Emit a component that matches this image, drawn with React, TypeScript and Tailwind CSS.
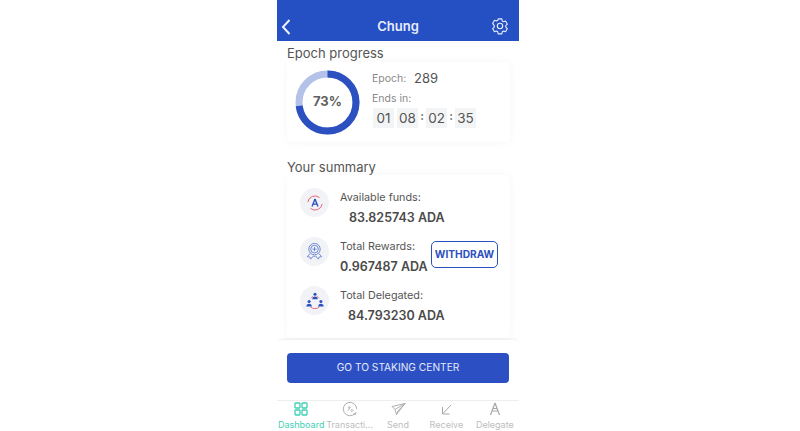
import React from "react";

const font = { fontFamily: '"Inter", "Liberation Sans", sans-serif' };

function Ring() {
  const r = 28.5;
  const c = 2 * Math.PI * r;
  return (
    <div className="relative w-[65px] h-[65px] shrink-0">
      <svg width="65" height="65" viewBox="0 0 65 65">
        <circle cx="32.5" cy="32.5" r={r} fill="none" stroke="#b4c1e8" strokeWidth="7" />
        <circle cx="32.5" cy="32.5" r={r} fill="none" stroke="#2c50c0" strokeWidth="7" strokeDasharray={`${c * 0.73} ${c}`} transform="rotate(-90 32.5 32.5)" />
      </svg>
      <div className="absolute inset-0 flex items-center justify-center text-[13px] font-bold text-[#606060]">73%</div>
    </div>
  );
}

function TimeBox({ v }: { v: string }) {
  return <div className="w-[21px] h-[20px] bg-[#f3f4f6] flex items-center justify-center text-[13.5px] text-[#555]">{v}</div>;
}

function Colon() {
  return <div className="w-[8px] text-center text-[11px] font-bold leading-[14px] text-[#555] mb-[5px]">:</div>;
}

function AdaIcon() {
  return (
    <svg width="18" height="18" viewBox="0 0 20 20" fill="none">
      <path d="M2 9a8 8 0 0 1 13-5" stroke="#e0556f" strokeWidth="1" />
      <path d="M18 11a8 8 0 0 1-13 5" stroke="#e0556f" strokeWidth="1" />
      <path d="M10 5.500l-3.300 8.500M10 5.500l3.300 8.500M7.800 11.200h4.400" stroke="#2c50c0" strokeWidth="1.500" />
    </svg>
  );
}

function RewardIcon() {
  return (
    <svg width="19" height="19" viewBox="0 0 20 20" fill="none" stroke="#5b78cf" strokeWidth="0.9">
      <circle cx="10" cy="7.500" r="6" />
      <circle cx="10" cy="7.500" r="4" />
      <path d="M10 5.300v4.400M7.800 7.500h4.400" />
      <path d="M5.500 12l-3 3.500 2.500.3 1 2.200 3-3.500 1 1 1-1 3 3.500 1-2.200 2.500-.3-3-3.500" />
    </svg>
  );
}

function DelegatedIcon() {
  return (
    <svg width="20" height="20" viewBox="0 0 22 22" fill="none">
      <path d="M6 17.500a7.500 7.500 0 0 0 10 0" stroke="#e0556f" strokeWidth="0.9" />
      <path d="M6.500 8a6 6 0 0 1 2.500-2M15.500 8a6 6 0 0 0-2.500-2" stroke="#e0556f" strokeWidth="0.9" />
      <g fill="#2c50c0">
        <circle cx="11" cy="3.500" r="1.700" />
        <path d="M8 9c0-2 1.300-3 3-3s3 1 3 3z" />
        <circle cx="4.500" cy="11.500" r="1.700" />
        <path d="M1.500 17c0-2 1.300-3 3-3s3 1 3 3z" />
        <circle cx="17.500" cy="11.500" r="1.700" />
        <path d="M14.500 17c0-2 1.300-3 3-3s3 1 3 3z" />
      </g>
    </svg>
  );
}

function Row({ icon, label, value, valueClass, action }: { icon: React.ReactNode; label: string; value: string; valueClass: string; action?: React.ReactNode }) {
  return (
    <div className="flex items-start h-[49px]">
      <div className="w-[29px] h-[29px] rounded-full bg-[#f1f3f6] flex items-center justify-center shrink-0 mt-[1px]">{icon}</div>
      <div className="ml-[11px] flex-1 min-w-0">
        <div className="text-[10.8px] leading-[16px] text-[#555] mt-[3px]">{label}</div>
        <div className={`text-[12.500px] leading-[16px] font-semibold text-[#4a4a4a] mt-[4px] whitespace-nowrap ${valueClass}`}>{value}</div>
      </div>
      {action}
    </div>
  );
}

function Tab({ label, active, children }: { label: string; active?: boolean; children: React.ReactNode }) {
  return (
    <div className="flex-1 flex flex-col items-center min-w-0">
      <div className="h-[19px] flex items-center justify-center">{children}</div>
      <div className={`text-[9px] leading-[12px] mt-[2px] whitespace-nowrap ${active ? "text-[#3fd0b4]" : "text-[#bdbdbd]"}`}>{label}</div>
    </div>
  );
}

export default function App() {
  return (
    <div className="w-[800px] h-[431px] bg-white overflow-hidden pl-[277px]" style={font}>
      <div className="w-[242px] h-[431px] flex flex-col bg-white">
        <header className="h-[41px] shrink-0 bg-[#2450c4] flex items-center justify-between pl-[3px] pr-[10px] pt-[12px] text-white">
          <div className="w-[30px]">
            <svg width="12" height="18" viewBox="0 0 12 18" fill="none" stroke="#eef2fb" strokeWidth="2"><path d="M9.500 2L3 9l6.500 7" /></svg>
          </div>
          <div className="text-[13px] font-semibold text-[#e8edfa]">Chung</div>
          <div className="w-[23px] flex justify-end mt-[-1px]">
            <svg width="18" height="18" viewBox="0 0 24 24" fill="none" stroke="#e8edfa" strokeWidth="1.500" strokeLinejoin="round">
              <path d="M9.600 2.500h4.800l.6 2.800 1.700 1 2.700-.9 2.400 4.200-2.100 1.900v2l2.100 1.900-2.400 4.200-2.700-.9-1.700 1-.6 2.800H9.600L9 19.700l-1.700-1-2.700.9-2.400-4.200 2.100-1.900v-2L2.200 8.600l2.400-4.200 2.700.9 1.700-1z" />
              <circle cx="12" cy="12" r="3.600" />
            </svg>
          </div>
        </header>

        <div className="px-[10px] flex-1 min-h-0 flex flex-col">
          <div className="text-[13px] leading-[18px] text-[#555] mt-[3px]">Epoch progress</div>
          <section className="h-[80px] w-[223px] bg-white rounded-[4px] shadow-[0_0_10px_rgba(0,0,0,0.04)] flex items-center pl-[8px]">
            <Ring />
            <div className="ml-[12px] mt-[-6px]">
              <div className="flex items-center h-[18px]">
                <span className="text-[10.500px] text-[#8a8a8a] w-[42px]">Epoch:</span>
                <span className="text-[13px] text-[#555]">289</span>
              </div>
              <div className="text-[10.500px] leading-[14px] text-[#8a8a8a] mt-[4px]">Ends in:</div>
              <div className="flex items-center mt-[2px] ml-[1px]">
                <TimeBox v="01" />
                <div className="w-[3px]" />
                <TimeBox v="08" />
                <Colon />
                <TimeBox v="02" />
                <Colon />
                <TimeBox v="35" />
              </div>
            </div>
          </section>
          <div className="text-[13px] leading-[18px] text-[#555] mt-[16px]">Your summary</div>
          <section className="mt-[-1px] h-[163px] w-[223px] bg-white rounded-[4px] shadow-[0_0_10px_rgba(0,0,0,0.04)] pl-[13px] pt-[12px]">
            <Row icon={<AdaIcon />} label="Available funds:" value="83.825743 ADA" valueClass="pl-[9px]" />
            <Row
              icon={<RewardIcon />}
              label="Total Rewards:"
              value="0.967487 ADA"
              valueClass=""
              action={
                <div className="w-[67px] h-[27px] mr-[12px] mt-[5px] border-[1.500px] border-[#2c50c0] rounded-[5px] flex items-center justify-center text-[10.200px] font-bold text-[#2c50c0] shrink-0">WITHDRAW</div>
              }
            />
            <Row icon={<DelegatedIcon />} label="Total Delegated:" value="84.793230 ADA" valueClass="pl-[8px]" />
          </section>
        </div>

        <div className="h-[60px] shrink-0 bg-white rounded-t-[6px] shadow-[0_-3px_3px_-2px_rgba(0,0,0,0.08)] px-[10px] pt-[13px]">
          <div className="w-[222px] h-[30px] rounded-[4px] bg-[#2c50c4] flex items-center justify-center text-[10.200px] text-[#e4e9f8]">GO TO STAKING CENTER</div>
        </div>

        <nav className="h-[31px] shrink-0 border-t border-[#eeeeee] flex">
          <Tab label="Dashboard" active>
            <svg width="14" height="14" viewBox="0 0 14 14" fill="none" stroke="#3fd0b4" strokeWidth="1.300">
              <rect x="1" y="1" width="5" height="5" rx="0.8" />
              <rect x="8" y="1" width="5" height="5" rx="0.8" />
              <rect x="1" y="8" width="5" height="5" rx="0.8" />
              <rect x="8" y="8" width="5" height="5" rx="0.8" />
            </svg>
          </Tab>
          <Tab label="Transacti...">
            <svg width="16" height="16" viewBox="0 0 16 16" fill="none" stroke="#b0b0b0" strokeWidth="1">
              <path d="M13 12.500A6.700 6.700 0 1 1 14.700 8" />
              <path d="M6 9.500L8 6.500M9 9.500a1 1 0 1 0 0-.1M6.500 6.500a.8.8 0 1 0 0-.1" strokeWidth="0.9" />
              <path d="M11 13l2.500.5.500-2.500" />
            </svg>
          </Tab>
          <Tab label="Send">
            <svg width="15" height="14" viewBox="0 0 15 14" fill="none" stroke="#b0b0b0" strokeWidth="1">
              <path d="M14 1.500L1 4.500l3 3 1.500 5z" />
              <path d="M14 1.500L4 7.500M14 1.500L7 9l-1.500 3.500" />
            </svg>
          </Tab>
          <Tab label="Receive">
            <svg width="13" height="13" viewBox="0 0 13 13" fill="none" stroke="#a8a8a8" strokeWidth="1">
              <path d="M11 2L3 10.500M2.500 4v7h7" />
            </svg>
          </Tab>
          <Tab label="Delegate">
            <svg width="12" height="14" viewBox="0 0 12 14" fill="none" stroke="#a8a8a8" strokeWidth="1.200">
              <path d="M6 1L1.500 13M6 1l4.500 12M3 9h6M3.800 6.500h4.400" />
            </svg>
          </Tab>
        </nav>
      </div>
    </div>
  );
}
